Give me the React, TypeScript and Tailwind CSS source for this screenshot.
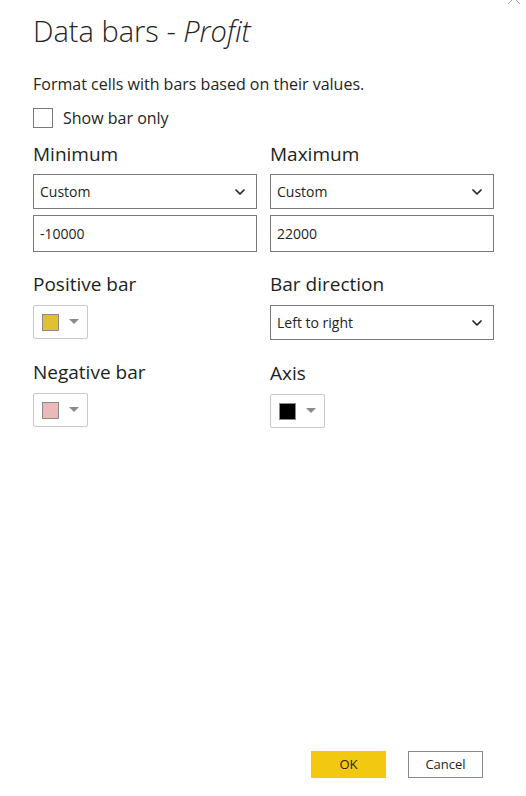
import { ChevronDown } from "lucide-react";

const font = { fontFamily: '"Open Sans", "Noto Sans", sans-serif' };

function Select({ value }: { value: string }) {
    return (
        <div className="flex h-[35px] items-center justify-between border border-[#7a7a7a] bg-white pl-[6px] pr-[8px] text-[14px] text-[#252423]">
            <span>{value}</span>
            <ChevronDown size={16} strokeWidth={2.6} className="text-[#252423]" />
        </div>
    );
}

function TextInput({ value }: { value: string }) {
    return (
        <div className="flex h-[37px] items-center border border-[#7a7a7a] bg-white px-[6px] text-[14px] text-[#252423]">
            {value}
        </div>
    );
}

function ColorPicker({ color }: { color: string }) {
    return (
        <div className="flex h-[34px] w-[55px] items-center rounded-[2px] border border-[#c8c8c8] bg-white pl-[8px]">
            <div className="h-[17px] w-[17px] border border-[#8a8a8a]" style={{ background: color }} />
            <svg width="10" height="6" viewBox="0 0 10 6" className="ml-[10px]">
                <path d="M0 0 L10 0 L5 5 Z" fill="#8a8a8a" />
            </svg>
        </div>
    );
}

function Label({ children }: { children: React.ReactNode }) {
    return <div className="text-[19px] leading-[24px] text-[#201f1e]">{children}</div>;
}

export default function App() {
    return (
        <div className="relative flex h-[796px] w-[526px] flex-col bg-white px-[33px]" style={font}>
            {/* close button, mostly scrolled off the top */}
            <svg width="16" height="4" viewBox="0 0 16 4" className="absolute right-[4px] top-0">
                <path d="M6 0 L2 4 M10 0 L14 4" stroke="#a0a0a0" strokeWidth="1" />
            </svg>

            <h1 className="mt-[11px] text-[29px] font-light leading-[40px] text-[#252423]">
                Data bars - <span className="italic">Profit</span>
            </h1>

            <p className="mt-[22px] text-[16px] leading-[22px] text-[#252423]">
                Format cells with bars based on their values.
            </p>

            <label className="mt-[11px] flex items-center gap-[10px] text-[16px] text-[#252423]">
                <span className="h-[20px] w-[20px] border border-[#7a7a7a] bg-white" />
                Show bar only
            </label>

            <div className="mt-[12px] grid grid-cols-[224px_224px] gap-x-[13px]">
                <div className="flex flex-col">
                    <Label>Minimum</Label>
                    <div className="mt-[8px]"><Select value="Custom" /></div>
                    <div className="mt-[6px]"><TextInput value="-10000" /></div>

                    <div className="mt-[20px]"><Label>Positive bar</Label></div>
                    <div className="mt-[9px]"><ColorPicker color="#e0c131" /></div>

                    <div className="mt-[21px]"><Label>Negative bar</Label></div>
                    <div className="mt-[9px]"><ColorPicker color="#ecb9bb" /></div>
                </div>
                <div className="flex flex-col">
                    <Label>Maximum</Label>
                    <div className="mt-[8px]"><Select value="Custom" /></div>
                    <div className="mt-[6px]"><TextInput value="22000" /></div>

                    <div className="mt-[20px]"><Label>Bar direction</Label></div>
                    <div className="mt-[9px]"><Select value="Left to right" /></div>

                    <div className="mt-[21px]"><Label>Axis</Label></div>
                    <div className="mt-[9px]"><ColorPicker color="#000000" /></div>
                </div>
            </div>

            <div className="mt-auto mb-[18px] flex justify-end gap-[22px] pr-[10px]">
                <button className="h-[27px] w-[75px] bg-[#f2c811] text-[13px] text-[#252423]">OK</button>
                <button className="h-[27px] w-[75px] border border-[#8a8a8a] bg-white text-[13px] text-[#252423]">
                    Cancel
                </button>
            </div>
        </div>
    );
}
